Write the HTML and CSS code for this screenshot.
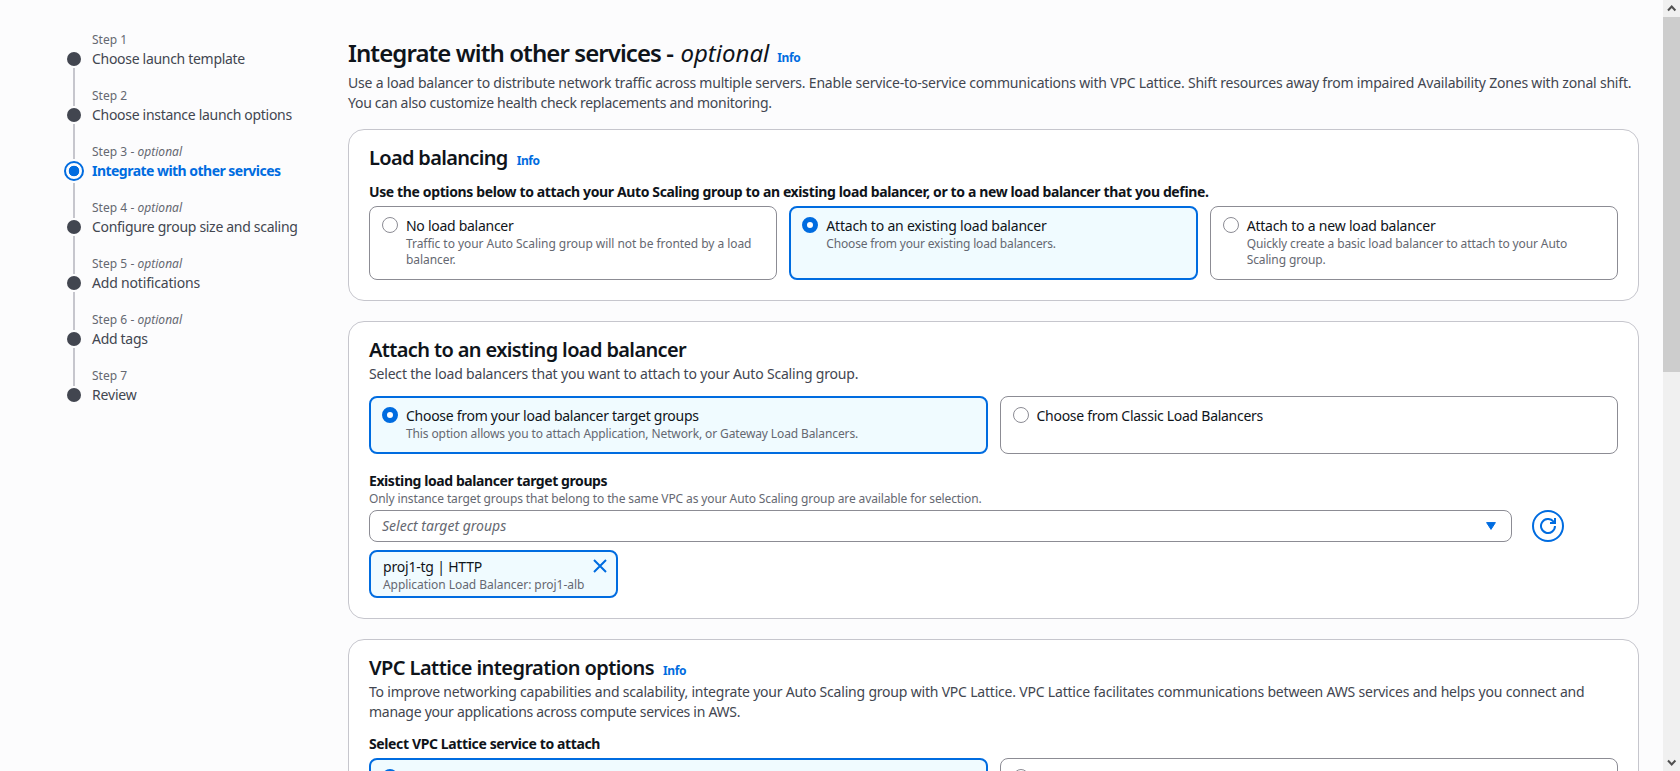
FILE: index.html
```html
<!DOCTYPE html>
<html lang="en">
<head>
<meta charset="utf-8">
<title>Integrate with other services</title>
<link rel="stylesheet" href="styles.css">
</head>
<body>
<div class="page">
  <nav class="steps">
    <div class="step"><div class="step-no">Step 1</div><div class="step-name"><span class="dot"></span><span class="step-text">Choose launch template</span></div></div>
    <div class="step"><div class="step-no">Step 2</div><div class="step-name"><span class="dot"></span><span class="step-text">Choose instance launch options</span></div></div>
    <div class="step active"><div class="step-no">Step 3 - <i>optional</i></div><div class="step-name"><span class="dot"></span><span class="step-text">Integrate with other services</span></div></div>
    <div class="step"><div class="step-no">Step 4 - <i>optional</i></div><div class="step-name"><span class="dot"></span><span class="step-text">Configure group size and scaling</span></div></div>
    <div class="step"><div class="step-no">Step 5 - <i>optional</i></div><div class="step-name"><span class="dot"></span><span class="step-text loose">Add notifications</span></div></div>
    <div class="step"><div class="step-no">Step 6 - <i>optional</i></div><div class="step-name"><span class="dot"></span><span class="step-text">Add tags</span></div></div>
    <div class="step"><div class="step-no">Step 7</div><div class="step-name"><span class="dot"></span><span class="step-text loose">Review</span></div></div>
  </nav>

  <main class="content">
    <header class="page-head">
      <h1>Integrate with other services - <i>optional</i><a class="info">Info</a></h1>
      <p class="desc">Use a load balancer to distribute network traffic across multiple servers. Enable service-to-service communications with VPC Lattice. Shift resources away from impaired Availability Zones with zonal shift.<br><span class="tight">You can also customize health check replacements and monitoring.</span></p>
    </header>

    <section class="card card-lb">
      <h2>Load balancing<a class="info">Info</a></h2>
      <div class="label lb-label">Use the options below to attach your Auto Scaling group to an existing load balancer, or to a new load balancer that you define.</div>
      <div class="tiles three">
        <div class="tile"><span class="radio"></span><div class="tile-body"><div class="tile-name tight">No load balancer</div><div class="hint loose">Traffic to your Auto Scaling group will not be fronted by a load<br>balancer.</div></div></div>
        <div class="tile on"><span class="radio"></span><div class="tile-body"><div class="tile-name">Attach to an existing load balancer</div><div class="hint tight">Choose from your existing load balancers.</div></div></div>
        <div class="tile"><span class="radio"></span><div class="tile-body"><div class="tile-name">Attach to a new load balancer</div><div class="hint">Quickly create a basic load balancer to attach to your Auto<br>Scaling group.</div></div></div>
      </div>
    </section>

    <section class="card card-attach">
      <h2>Attach to an existing load balancer</h2>
      <p class="desc">Select the load balancers that you want to attach to your Auto Scaling group.</p>
      <div class="tiles two">
        <div class="tile on"><span class="radio"></span><div class="tile-body"><div class="tile-name tight">Choose from your load balancer target groups</div><div class="hint">This option allows you to attach Application, Network, or Gateway Load Balancers.</div></div></div>
        <div class="tile"><span class="radio"></span><div class="tile-body"><div class="tile-name tight">Choose from Classic Load Balancers</div></div></div>
      </div>
      <div class="label field-label">Existing load balancer target groups</div>
      <div class="hint field-hint">Only instance target groups that belong to the same VPC as your Auto Scaling group are available for selection.</div>
      <div class="field-row">
        <div class="select"><i>Select target groups</i><svg width="10" height="8" viewBox="0 0 10 8"><path d="M.6.6h8.8L5 7.4z" fill="#006ce0" stroke="#006ce0" stroke-linejoin="round"/></svg></div>
        <button class="refresh" aria-label="Refresh"><svg width="16" height="16" viewBox="0 0 16 16" fill="none" stroke="#006ce0" stroke-width="2"><path d="M15 8a7 7 0 1 1-1.7-4.6L15 5"/><path d="M15 0v5h-5"/></svg></button>
      </div>
      <div class="token"><div class="tile-body"><div class="tile-name">proj1-tg | HTTP</div><div class="hint loose">Application Load Balancer: proj1-alb</div></div><svg width="16" height="16" viewBox="0 0 16 16" fill="none" stroke="#006ce0" stroke-width="2"><path d="M2 2l12 12M14 2L2 14"/></svg></div>
    </section>

    <section class="card card-vpc">
      <h2>VPC Lattice integration options<a class="info">Info</a></h2>
      <p class="desc">To improve networking capabilities and scalability, integrate your Auto Scaling group with VPC Lattice. VPC Lattice facilitates communications between AWS services and helps you connect and<br><span class="tight">manage your applications across compute services in AWS.</span></p>
      <div class="label vpc-label">Select VPC Lattice service to attach</div>
      <div class="tiles two">
        <div class="tile on"><span class="radio"></span></div>
        <div class="tile"><span class="radio"></span></div>
      </div>
    </section>
  </main>

  <div class="scrollbar">
    <svg class="arrow" width="17" height="17" viewBox="0 0 17 17" fill="none" stroke="#505050" stroke-width="2"><path d="M5 10.5l3.7-4 3.7 4"/></svg>
    <div class="thumb"></div>
    <svg class="arrow" width="17" height="17" viewBox="0 0 17 17" fill="none" stroke="#505050" stroke-width="2"><path d="M5 6.5l3.7 4 3.7-4"/></svg>
  </div>
</div>
</body>
</html>
```
FILE: styles.css
```css
* { box-sizing: border-box; }
body { margin: 0; background: #fcfcfd; color: #0f141a; font: 14px/20px "Noto Sans", "Open Sans", sans-serif; letter-spacing: -0.2px; }
h1, h2, p { margin: 0; }
.page { display: flex; height: 771px; overflow: hidden; }
.tight { letter-spacing: -0.28px; }

/* Wizard steps */
.steps { width: 348px; padding: 32px 0 0 66px; flex: none; }
.step { height: 56px; position: relative; }
.step-no { padding-left: 26px; font-size: 12px; line-height: 16px; color: #656871; letter-spacing: 0.03px; }
.step-name { display: flex; align-items: center; gap: 10px; height: 22px; color: #424650; }
.step-text { letter-spacing: -0.3px; padding-bottom: 1px; }
.step-text.loose { letter-spacing: -0.18px; }
.dot { width: 14px; height: 14px; margin: 0 1px; border-radius: 50%; background: #424650; flex: none; }
.step:not(:last-child)::after { content: ""; position: absolute; left: 7px; top: 36px; width: 2px; height: 38px; background: #c6c6cd; }
.step:nth-child(2)::after { height: 35px; }
.step:nth-child(3)::after { top: 39px; height: 35px; }
.active .step-name { color: #006ce0; }
.active .step-text { font-weight: 700; letter-spacing: -0.53px; }
.active .dot { width: 20px; height: 20px; margin: 0 -2px; background: radial-gradient(circle, #006ce0 5px, #fcfcfd 5.6px); border: 2px solid #006ce0; }

/* Page header */
.content { width: 1291px; flex: none; }
.page-head { height: 129px; padding-top: 38px; }
h1 { font-size: 24px; line-height: 30px; font-weight: 600; height: 35px; letter-spacing: -0.92px; }
h1 i { font-weight: 400; letter-spacing: 0; margin-left: 2px; }
.info { font-size: 12px; line-height: 1; font-weight: 700; color: #006ce0; letter-spacing: -0.4px; margin-left: 8px; }
.desc { color: #424650; white-space: nowrap; }

/* Cards */
.card { border: 1px solid #c6c6cd; border-radius: 16px; background: #fff; padding: 16px 20px 0; margin-bottom: 20px; }
.card-lb { height: 172px; }
.card-attach { height: 298px; }
.card-vpc { height: 300px; }
h2 { font-size: 20px; line-height: 24px; height: 24px; font-weight: 600; letter-spacing: -0.67px; }
h2 .info { margin-left: 9px; }
.card-attach h2 { letter-spacing: -0.63px; }
.card-vpc h2 { letter-spacing: -0.57px; }
.card .desc { margin-top: 2px; }
.card-attach .desc { letter-spacing: -0.18px; }
.label { font-weight: 700; letter-spacing: -0.373px; }
.lb-label { margin: 12px 0 4px; }

/* Selectable tiles */
.tiles { display: grid; gap: 12px; }
.three { grid-template-columns: repeat(3, 1fr); grid-auto-rows: 74px; }
.two { grid-template-columns: repeat(2, 1fr); grid-auto-rows: 58px; }
.tile { display: flex; gap: 8px; border: 1px solid #8c8c94; border-radius: 8px; padding: 8px 12px; }
.tile-body { padding-top: 1px; }
.on { border: 2px solid #006ce0; background: #f0fbff; padding: 7px 11px; }
.radio { width: 16px; height: 16px; margin-top: 2px; border: 1px solid #8c8c94; border-radius: 50%; background: #fff; flex: none; }
.on .radio { border: 5px solid #006ce0; }
.hint { font-size: 12px; line-height: 16px; color: #656871; letter-spacing: -0.115px; white-space: nowrap; }
.hint.loose { letter-spacing: -0.05px; }
.hint.tight { letter-spacing: -0.18px; }
.card-attach .tiles { margin-top: 12px; }

/* Target group field */
.field-label { margin-top: 17px; letter-spacing: -0.42px; }
.field-hint { margin: 0 0 3px; }
.field-row { display: flex; gap: 20px; }
.select { width: 1143px; height: 32px; display: flex; align-items: center; justify-content: space-between; padding: 0 15px 0 12px; border: 1px solid #8c8c94; border-radius: 8px; color: #656871; letter-spacing: 0; }
.refresh { width: 32px; height: 32px; padding: 0; border: 2px solid #006ce0; border-radius: 50%; background: #fff; display: flex; align-items: center; justify-content: center; }
.token { display: flex; justify-content: space-between; width: 249px; height: 48px; margin-top: 8px; padding: 4px 8px 0 12px; border: 2px solid #006ce0; border-radius: 8px; background: #f0fbff; }
.token svg { margin-top: 2px; }
.vpc-label { margin: 12px 0 4px; }
.card-vpc .tiles { grid-auto-rows: 90px; }

/* Scrollbar */
.scrollbar { width: 17px; margin-left: auto; background: #f0f0f0; display: flex; flex-direction: column; }
.thumb { height: 355px; background: #cdcdcd; }
.arrow { flex: none; }
.arrow:last-child { margin-top: auto; }
```
